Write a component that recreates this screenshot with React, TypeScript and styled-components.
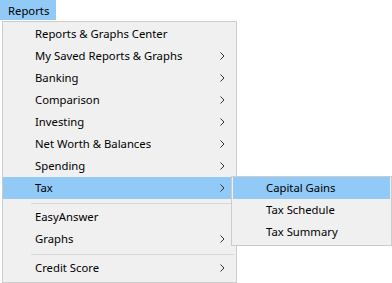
import React from 'react';
import styled, { createGlobalStyle } from 'styled-components';

const GlobalStyle = createGlobalStyle`
    body {
        margin: 0;
        background: #FFF;
        font-family: "Noto Sans", "Liberation Sans", sans-serif;
        font-size: 11.3px;
        color: #000;
    }
`;

const Page = styled.div`
    position: relative;
    width: 392px;
    height: 283px;
    overflow: hidden;
    background-color: #FFF;
`;

const MenuBar = styled.div`
    display: flex;
    height: 20px;
`;

const MenuBarItem = styled.div<{ $active?: boolean }>`
    display: flex;
    align-items: center;
    width: 56px;
    box-sizing: border-box;
    padding: 0 0 0 8px;
    height: 20px;
    background-color: ${p => (p.$active ? '#91C9F7' : 'transparent')};
`;

const Dropdown = styled.div`
    position: absolute;
    left: 2px;
    top: 21px;
    width: 235px;
    box-sizing: border-box;
    border: 1px solid #CCCCCC;
    background-color: #F0F0F0;
    padding: 1px 0 3px;
    display: flex;
    flex-direction: column;
    z-index: 1;
`;

const SubMenu = styled.div`
    position: absolute;
    left: 228px;
    top: -1px;
    width: 161px;
    box-sizing: border-box;
    border: 1px solid #CCCCCC;
    background-color: #F0F0F0;
    padding: 0 1px 2px;
    display: flex;
    flex-direction: column;
    z-index: 2;
`;

const MenuItem = styled.div<{ $highlighted?: boolean, $indent: number }>`
    position: relative;
    display: flex;
    align-items: center;
    height: 22px;
    padding: 0 11px 0 ${p => p.$indent}px;
    background-color: ${p => (p.$highlighted ? '#91C9F7' : 'transparent')};
    white-space: nowrap;
`;

const Label = styled.span`
    flex: 1;
    line-height: 22px;
`;

const Separator = styled.div`
    height: 1px;
    margin: 4px 2px 2px 28px;
    background-color: #D7D7D7;
`;

const Chevron = () => (
    <svg width="5" height="8" viewBox="0 0 5 8">
        <path d="M0.5 0.5 L4 4 L0.5 7.5" fill="none" stroke="#333" strokeWidth="1" />
    </svg>
);

type Entry = { label: string, sub?: boolean } | 'sep';

const mainEntries: Entry[] = [
    { label: 'Reports & Graphs Center' },
    { label: 'My Saved Reports & Graphs', sub: true },
    { label: 'Banking', sub: true },
    { label: 'Comparison', sub: true },
    { label: 'Investing', sub: true },
    { label: 'Net Worth & Balances', sub: true },
    { label: 'Spending', sub: true },
    { label: 'Tax', sub: true },
    'sep',
    { label: 'EasyAnswer' },
    { label: 'Graphs', sub: true },
    'sep',
    { label: 'Credit Score', sub: true },
];

const taxEntries = ['Capital Gains', 'Tax Schedule', 'Tax Summary'];

const App = () => {
    return (
        <Page>
            <GlobalStyle />
            <MenuBar>
                <MenuBarItem $active>Reports</MenuBarItem>
            </MenuBar>
            <Dropdown>
                {mainEntries.map((entry, i) => {
                    if (entry === 'sep') return <Separator key={i} />;
                    const isTax = entry.label === 'Tax';
                    return (
                        <MenuItem key={i} $indent={32} $highlighted={isTax}>
                            <Label>{entry.label}</Label>
                            {entry.sub && <Chevron />}
                            {isTax && (
                                <SubMenu>
                                    {taxEntries.map((label, j) => (
                                        <MenuItem key={label} $indent={33} $highlighted={j === 0}>
                                            <Label>{label}</Label>
                                        </MenuItem>
                                    ))}
                                </SubMenu>
                            )}
                        </MenuItem>
                    );
                })}
            </Dropdown>
        </Page>
    );
};

export default App;
